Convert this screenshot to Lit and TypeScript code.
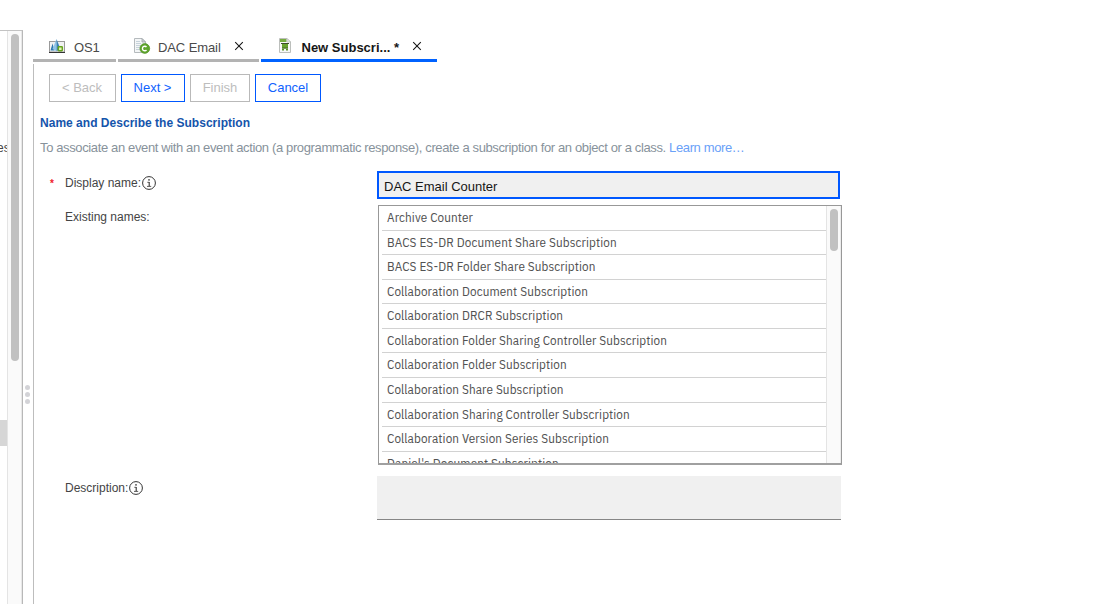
import { LitElement, html, css, svg, nothing } from "lit";
import { customElement, property } from "lit/decorators.js";
import { classMap } from "lit/directives/class-map.js";

const storeIcon = svg`<svg width="16" height="15" viewBox="0 0 16 15">
  <rect x="0.5" y="2.500" width="15" height="10.500" fill="#f1f2f2" stroke="#9a9a9a"/>
  <path d="M0 13.500h16" stroke="#333" stroke-width="1"/>
  <path d="M3.500 4.500L5.500 11.500H1.500z" fill="#2f78ad"/>
  <path d="M7.500 0L3.500 10L7.500 12.300z" fill="#8fc4e8"/>
  <path d="M7.500 0L11.500 10L7.500 12.300z" fill="#3a82b5"/>
  <rect x="9.300" y="7.700" width="4" height="4" rx=".6" fill="#e2f3b8" stroke="#68a520" stroke-width="1.500"/>
</svg>`;

const classIcon = svg`<svg width="17" height="16" viewBox="0 0 17 16">
  <path d="M.5 .5h7.500l3.500 3.500v10.500h-11z" fill="#f4f6f7" stroke="#b5babd"/>
  <path d="M8 .5v3.500h3.500z" fill="#cfd4d7" stroke="#a0a5a8" stroke-width=".8"/>
  <path d="M2 3.500h4M2 5.500h5M2 7.500h5M2 9.500h4M2 11.500h4" stroke="#c6d2da"/>
  <circle cx="10.800" cy="10.500" r="4.900" fill="#5fa52c" stroke="#468a1c" stroke-width=".6"/>
  <path d="M12.500 9A2.300 2.300 0 1 0 12.500 12" fill="none" stroke="#fff" stroke-width="1.400"/>
</svg>`;

const subscriptionIcon = svg`<svg width="12" height="15" viewBox="0 0 12 15">
  <path d="M.5 .5h7.500l3.500 3.500v10.500h-11z" fill="#f8f8f8" stroke="#bcbfbc"/>
  <path d="M1 1h6.500v3H1z" fill="#79ad42"/>
  <path d="M8 .5v3.500h3.500z" fill="#eef1eb" stroke="#b4b7b4" stroke-width=".7"/>
  <path d="M2 5h8v1H2z" fill="#3c4b2a"/>
  <path d="M3 6h6v4H3z" fill="#69a230"/>
  <path d="M3 9.500h6v1.200H3z" fill="#47701f"/>
  <path d="M3 11h2v1.500H3zM7 11h2v1.500H7z" fill="#5c9129"/>
</svg>`;

const infoIcon = svg`<svg width="14" height="14" viewBox="0 0 14 14" fill="none" stroke="#333">
  <circle cx="7" cy="7" r="6.400"/>
  <path d="M5.300 6.300h1.900" stroke-width=".8"/>
  <path d="M7.200 6v4.300" stroke-width="1.100"/>
  <path d="M5 10.400h4.200" stroke-width=".8"/>
  <circle cx="7" cy="3.900" r=".8" fill="#333" stroke="none"/>
</svg>`;

const closeIcon = svg`<svg class="close" width="10" height="10" viewBox="0 0 10 10">
  <path d="M1.200 1.200l7.600 7.600M8.800 1.200l-7.600 7.600" stroke="#161616" stroke-width="1.050"/>
</svg>`;

@customElement("app-tab")
class AppTab extends LitElement {
  static styles = css`
    :host { display: block; }
    .tab { box-sizing: border-box; height: 30px; border-bottom: 3px solid #b3b3b3; display: flex; align-items: center; padding-left: 16px; color: #4a4a4a; font-size: 13px; white-space: nowrap; }
    .tab.active { padding-left: 18px; border-color: #0062ff; color: #161616; font-weight: 700; }
    .icon { display: flex; width: 25px; flex: none; margin-top: 1px; }
    .closable .icon { width: 24px; }
    .active .icon { width: 22.500px; margin-top: 0; }
    .label { margin-top: 4px; letter-spacing: -0.100px; }
    .active .label { letter-spacing: 0; }
    .close { margin-left: 13px; margin-top: 1px; }
  `;
  @property({ type: Boolean }) active = false;
  @property({ type: Boolean }) closable = false;
  @property() label = "";
  @property({ attribute: false }) icon: unknown;

  render() {
    return html`<div class=${classMap({ tab: true, active: this.active, closable: this.closable })}>
      <span class="icon">${this.icon}</span><span class="label">${this.label}</span>${this.closable ? closeIcon : nothing}
    </div>`;
  }
}

@customElement("name-list")
class NameList extends LitElement {
  static styles = css`
    :host { display: block; }
    .box { box-sizing: border-box; width: 464px; height: 260px; border: 1px solid #989898; border-bottom: 2px solid #a0a0a0; display: flex; overflow: hidden; background: #fff; }
    .rows { width: 447px; overflow: hidden; padding-left: 3px; box-sizing: border-box; }
    .row { box-sizing: border-box; height: 24.580px; border-bottom: 1px solid #d2d2d2; padding-left: 5px; font: 13px/23px "IBM Plex Sans Condensed", Roboto, sans-serif; color: #525252; white-space: nowrap; letter-spacing: 0.115px; }
    .track { box-sizing: border-box; width: 15px; background: #fafafa; border-left: 1px solid #e4e4e4; border-right: 1px solid #ececec; padding: 3px 0 0 3px; }
    .thumb { width: 8px; height: 42px; border-radius: 4px; background: #c1c1c1; }
  `;
  @property({ attribute: false }) names: string[] = [];

  render() {
    return html`<div class="box">
      <div class="rows">${this.names.map((n) => html`<div class="row">${n}</div>`)}</div>
      <div class="track"><div class="thumb"></div></div>
    </div>`;
  }
}

@customElement("app-root")
class AppRoot extends LitElement {
  static styles = css`
    :host { display: block; width: 1093px; height: 604px; overflow: hidden; background: #fff; font-family: "Liberation Sans", Arial, sans-serif; }
    .page { display: flex; height: 604px; padding-top: 30px; box-sizing: border-box; }
    .side { width: 23px; flex: none; box-sizing: border-box; display: flex; border-top: 1px solid #c3c3c3; border-right: 1px solid #b8b8b8; }
    .tree { width: 7px; overflow: hidden; font-size: 12px; color: #444; }
    .tree-text { padding-top: 110px; line-height: 14px; height: 14px; margin-left: -3px; }
    .selected { margin-top: 265px; height: 26px; background: #d6d6d6; }
    .track { width: 15px; box-sizing: border-box; border-left: 1px solid #e4e4e4; border-right: 1px solid #e8e8e8; background: #fafafa; padding: 3px 0 0 3px; }
    .thumb { width: 8px; height: 327px; border-radius: 4px; background: #c1c1c1; }
    .splitter { width: 10px; flex: none; display: flex; flex-direction: column; align-items: flex-start; gap: 2px; padding: 355px 0 0 2px; box-sizing: border-box; }
    .dot { width: 5px; height: 5px; border-radius: 50%; background: #d3d3d7; }
    .main { flex: 1; display: flex; flex-direction: column; }
    .tabs { display: flex; gap: 2px; height: 34px; padding-top: 2px; box-sizing: border-box; }
    .t1 { width: 83px; }
    .t2 { width: 141px; }
    .t3 { width: 176px; }
    .content { flex: 1; border-left: 1px solid #bdbdbd; padding: 10px 0 0 6px; }
    .buttons { display: flex; gap: 5px; padding-left: 9px; }
    .btn { box-sizing: border-box; height: 28px; border: 1px solid #0058ff; background: #fff; color: #0f62fe; font: 13px/25px "Liberation Sans", Arial, sans-serif; padding: 0 0 1px; }
    .btn:disabled { border-color: #b9b9b9; color: #bdbdbd; }
    .back { width: 67px; padding-right: 1px; }
    .next { width: 64px; padding-right: 1px; }
    .finish { width: 60px; }
    .cancel { width: 66px; }
    .title { margin: 14px 0 0; font-size: 12px; line-height: 14px; color: #1554ab; letter-spacing: 0.020px; }
    .intro { margin: 11px 0 0; font-size: 13px; line-height: 14px; color: #87929b; letter-spacing: -0.370px; white-space: nowrap; }
    .link { color: #6aa1f8; text-decoration: none; }
    .form { display: grid; grid-template-columns: 337px 464px; }
    .label { display: flex; align-items: center; height: 14px; gap: 1px; padding-left: 10px; font-size: 12px; line-height: 14px; color: #444; }
    .star { width: 14px; flex: none; color: #f0202a; font-weight: 700; font-size: 10px; line-height: 11px; }
    .l1 { margin-top: 21px; }
    .l2 { margin-top: 5px; padding-left: 25px; }
    .l3 { margin-top: 16px; padding-left: 25px; }
    .input { box-sizing: border-box; margin: 16px 0 6px; width: 463px; height: 28px; border: 2px solid #0058ff; border-radius: 0; background: #f0f0f0; padding: 3px 5px 0; font: 13px "Liberation Sans", Arial, sans-serif; color: #161616; outline: none; }
    .list { margin-left: 1px; }
    .area { box-sizing: border-box; display: block; width: 464px; height: 44px; margin-top: 11px; border: 0; border-bottom: 1px solid #868686; border-radius: 0; background: #f0f0f0; resize: none; }
  `;

  private names = [
    "Archive Counter",
    "BACS ES-DR Document Share Subscription",
    "BACS ES-DR Folder Share Subscription",
    "Collaboration Document Subscription",
    "Collaboration DRCR Subscription",
    "Collaboration Folder Sharing Controller Subscription",
    "Collaboration Folder Subscription",
    "Collaboration Share Subscription",
    "Collaboration Sharing Controller Subscription",
    "Collaboration Version Series Subscription",
    "Daniel's Document Subscription",
  ];

  render() {
    return html`<div class="page">
      <div class="side">
        <div class="tree"><div class="tree-text">es</div><div class="selected"></div></div>
        <div class="track"><div class="thumb"></div></div>
      </div>
      <div class="splitter"><i class="dot"></i><i class="dot"></i><i class="dot"></i></div>
      <div class="main">
        <div class="tabs">
          <app-tab class="t1" label="OS1" .icon=${storeIcon}></app-tab>
          <app-tab class="t2" label="DAC Email" closable .icon=${classIcon}></app-tab>
          <app-tab class="t3" label="New Subscri... *" active closable .icon=${subscriptionIcon}></app-tab>
        </div>
        <div class="content">
          <div class="buttons">
            <button class="btn back" disabled>&lt; Back</button>
            <button class="btn next">Next &gt;</button>
            <button class="btn finish" disabled>Finish</button>
            <button class="btn cancel">Cancel</button>
          </div>
          <h1 class="title">Name and Describe the Subscription</h1>
          <p class="intro">To associate an event with an event action (a programmatic response), create a subscription for an object or a class. <a class="link">Learn more…</a></p>
          <div class="form">
            <div class="label l1"><span class="star">*</span><span>Display name:</span>${infoIcon}</div>
            <input class="input" .value=${"DAC Email Counter"} />
            <div class="label l2">Existing names:</div>
            <name-list class="list" .names=${this.names}></name-list>
            <div class="label l3"><span>Description:</span>${infoIcon}</div>
            <textarea class="area"></textarea>
          </div>
        </div>
      </div>
    </div>`;
  }
}
